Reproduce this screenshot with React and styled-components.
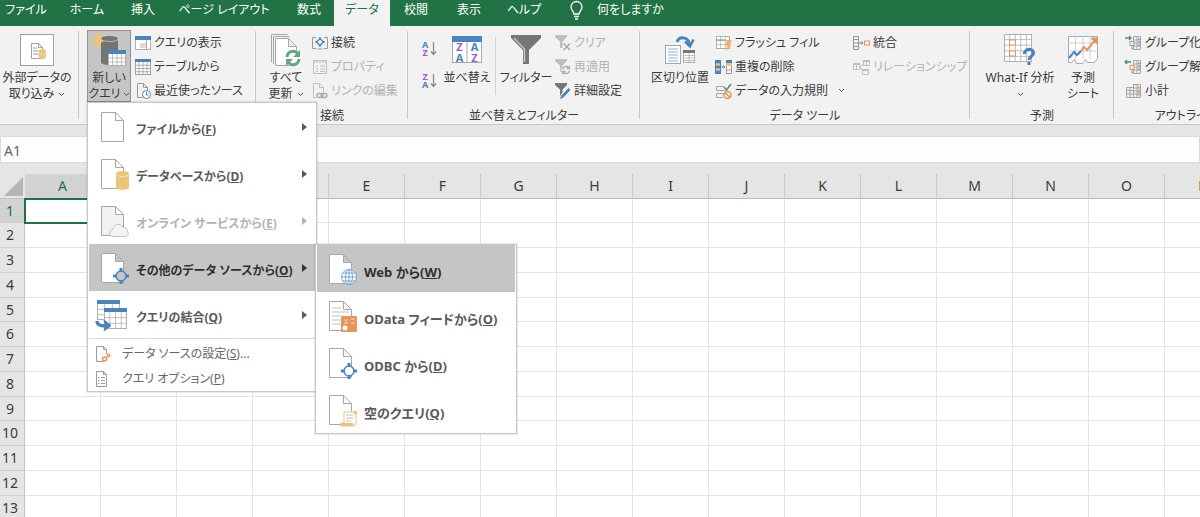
import React from "react";
import styled, { createGlobalStyle, css } from "styled-components";

const c = {
  green: "#217346",
  ribbon: "#f2f2f2",
  chrome: "#e5e5e5",
  line: "#c8c8c8",
  hover: "#c5c5c5",
  text: "#3b3b3b",
  muted: "#b3b3b3",
  blue: "#4a83bd",
  orange: "#e8935a",
  gold: "#ecc478",
  purple: "#9a5fc0",
  gray: "#767676",
};

const Global = createGlobalStyle`
  * { box-sizing: border-box; }
  body {
    margin: 0;
    font-family: "Noto Sans", "Noto Sans CJK JP", sans-serif;
    font-feature-settings: "palt";
    font-size: 12px;
    line-height: 16px;
    color: ${c.text};
  }
  button, input { font: inherit; font-feature-settings: inherit; color: inherit; }
  button { padding: 0; border: 0; background: none; white-space: nowrap; }
  svg { display: block; flex: none; overflow: visible; }
`;

const Page = styled.div`
  display: flex;
  flex-direction: column;
  height: 100vh;
  overflow: hidden;
  background: #fff;
`;

/* ---------- tab strip ---------- */
const Tabs = styled.nav`
  display: flex;
  flex: none;
  height: 26px;
  background: ${c.green};
`;
const Tab = styled.button`
  flex: none;
  width: ${(p) => p.$w}px;
  padding-bottom: 6px;
  color: ${(p) => (p.$active ? c.green : "#fff")};
  background: ${(p) => (p.$active ? c.ribbon : "transparent")};
`;
const TellMe = styled.button`
  display: flex;
  align-items: center;
  gap: 14px;
  padding: 0 0 6px 18px;
  color: #fff;
`;

/* ---------- ribbon ---------- */
const Ribbon = styled.div`
  display: flex;
  flex: none;
  height: 99px;
  background: ${c.ribbon};
  border-bottom: 1px solid ${c.line};
`;
const Group = styled.section`
  position: relative;
  flex: none;
  display: flex;
  flex-direction: column;
  width: ${(p) => p.$w}px;
  padding-top: 4px;
  &::after {
    content: "";
    position: absolute;
    top: 5px;
    right: 0;
    bottom: 5px;
    width: 1px;
    background: ${c.line};
  }
`;
const GroupBody = styled.div`
  display: flex;
  height: 72px;
  padding-left: ${(p) => p.$pad || 0}px;
`;
const GroupLabel = styled.div`
  padding-top: 6px;
  text-align: center;
  white-space: nowrap;
`;
const Large = styled.button`
  display: flex;
  flex: none;
  flex-direction: column;
  align-items: center;
  width: ${(p) => p.$w}px;
  height: 72px;
  padding-top: 3px;
  ${(p) =>
    p.$pressed &&
    css`
      background: ${c.hover};
      box-shadow: inset 0 0 0 1px #919191;
    `}
`;
const LargeIcon = styled.span`
  display: flex;
  align-items: center;
  justify-content: center;
  height: 34px;
  margin-bottom: 3px;
`;
const Line = styled.span`
  display: flex;
  align-items: center;
  gap: ${(p) => (p.$tight ? 2 : 4)}px;
  height: 16px;
`;
const Stack = styled.div`
  display: flex;
  flex: none;
  flex-direction: column;
  align-items: flex-start;
  width: ${(p) => (p.$w ? p.$w + "px" : "auto")};
  margin-left: ${(p) => p.$gap || 0}px;
`;
const Small = styled.button`
  display: flex;
  align-items: center;
  gap: 3px;
  height: 24px;
  padding-top: 1px;
  color: ${(p) => (p.disabled ? c.muted : c.text)};
  svg { opacity: ${(p) => (p.disabled ? 0.8 : 1)}; }
`;
const More = styled.span`
  margin-left: 7px;
`;
const SortStack = styled.div`
  display: flex;
  flex-direction: column;
  gap: 14px;
  width: 22px;
  padding-top: 10px;
`;
const Divider = styled.span`
  width: 1px;
  height: 58px;
  margin: 7px 4px 0 4px;
  background: #d4d4d4;
`;
const Anchor = styled.div`
  position: relative;
  flex: none;
`;

/* ---------- menus ---------- */
const Menu = styled.ul`
  position: absolute;
  z-index: 5;
  top: ${(p) => (p.$sub ? "0" : "100%")};
  left: ${(p) => (p.$sub ? "100%" : "0")};
  width: ${(p) => (p.$sub ? 202 : 230)}px;
  margin: 0;
  padding: 0 1px;
  list-style: none;
  background: #fff;
  border: 1px solid ${c.line};
  box-shadow: 0 0 1px 1px rgba(0, 0, 0, 0.08);
`;
const MenuRow = styled.li`
  position: relative;
`;
const MenuButton = styled.button`
  display: flex;
  align-items: center;
  width: 100%;
  height: 47px;
  padding-left: ${(p) => (p.$sub ? 6 : 6)}px;
  font-size: ${(p) => (p.$sub ? 13 : 12)}px;
  font-weight: bold;
  color: ${(p) => (p.disabled ? c.muted : p.$on ? "#303030" : "#5a5a5a")};
  background: ${(p) => (p.$on ? c.hover : "transparent")};
`;
const MenuText = styled.span`
  flex: 1;
  padding: 6px 0 0 7px;
  text-align: left;
`;
const Arrow = styled.span`
  margin-right: 8px;
  border: solid transparent;
  border-width: 4px 0 4px 5px;
  border-left-color: currentColor;
`;
const MinorItem = styled.button`
  display: flex;
  align-items: center;
  gap: 11px;
  width: 100%;
  height: 25px;
  padding-left: 6px;
  color: #666;
`;
const Rule = styled.li`
  height: 1px;
  margin: 0 0 2px;
  background: #dcdcdc;
`;

/* ---------- formula bar and sheet ---------- */
const NameBar = styled.div`
  flex: none;
  padding: 11px 0;
  background: ${c.chrome};
`;
const NameBox = styled.input`
  display: block;
  width: 100%;
  height: 27px;
  padding: 2px 3px 0;
  font-size: 14px;
  color: #666;
  background: #fdfdfd;
  border: 1px solid #d9d9d9;
`;
const SheetArea = styled.main`
  flex: 1;
  min-height: 0;
  overflow: hidden;
`;
const Sheet = styled.table`
  table-layout: fixed;
  width: 0;
  border-collapse: separate;
  border-spacing: 0;
  font-size: 14px;
  th, td { padding: 0; }
`;
const Col = styled.col`
  width: ${(p) => p.$w}px;
`;
const ColHead = styled.th`
  height: 25px;
  font-weight: normal;
  color: ${(p) => (p.$on ? c.green : c.text)};
  background: ${(p) => (p.$on ? "#d2d2d2" : c.chrome)};
  border-right: 1px solid #cacaca;
  border-bottom: 1px solid ${(p) => (p.$on ? c.green : "#b8b8b8")};
`;
const Corner = styled.th`
  background: ${c.chrome};
  border-bottom: 1px solid #c4c4c4;
  svg { margin-left: 3px; }
`;
const Row = styled.tr`
  height: 25px;
  &:nth-child(4n + 1) { height: 24px; }
`;
const RowHead = styled.th`
  && { padding-right: 4px; }
  font-weight: normal;
  line-height: 20px;
  color: ${(p) => (p.$on ? c.green : c.text)};
  background: ${(p) => (p.$on ? "#d2d2d2" : c.chrome)};
  border-right: 1px solid #c4c4c4;
  border-bottom: 1px solid #cfcfcf;
`;
const Cell = styled.td`
  border-right: 1px solid #e4e4e4;
  border-bottom: 1px solid #e4e4e4;
  ${(p) =>
    p.$on &&
    css`
      outline: 2px solid ${c.green};
      outline-offset: -1px;
    `}
`;

/* ---------- icons ---------- */
const Svg = ({ w = 16, h = 16, children }) => (
  <svg width={w} height={h} viewBox={`0 0 ${w} ${h}`} fill="none" aria-hidden="true">
    {children}
  </svg>
);
const Chevron = () => (
  <Svg w={7} h={5}>
    <path d="M1 1l2.500 2.500L6 1" stroke="#555" />
  </Svg>
);
const Bulb = () => (
  <Svg w={13} h={19}>
    <path d="M4 13c0-2.500-3-3.500-3-7a5.500 5.500 0 0111 0c0 3.500-3 4.500-3 7zM4 15.500h5M5 18h3" stroke="#fff" strokeWidth="1.300" />
  </Svg>
);
const Cylinder = ({ x, y, w, h, fill }) => (
  <g fill={fill}>
    <path d={`M${x} ${y + 2.5}v${h - 5}a${w / 2} 2.500 0 00${w} 0v${-(h - 5)}z`} />
    <ellipse cx={x + w / 2} cy={y + 2.5} rx={w / 2} ry="2.500" />
    <path d={`M${x} ${y + 3}a${w / 2} 2.500 0 00${w} 0`} fill="none" stroke="#fff" strokeOpacity=".7" strokeWidth=".7" />
  </g>
);
const Grid = ({ x, y, w, h, cols, rows, head = c.blue, line = "#b0b0b0", top = 3 }) => (
  <g>
    <rect x={x + 0.5} y={y + 0.5} width={w - 1} height={h - 1} fill="#fff" stroke={line} />
    {Array.from({ length: cols - 1 }, (_, i) => (
      <path key={"c" + i} d={`M${x + ((i + 1) * w) / cols} ${y + top}v${h - top}`} stroke={line} strokeWidth=".8" />
    ))}
    {Array.from({ length: rows - 1 }, (_, i) => (
      <path key={"r" + i} d={`M${x} ${y + top + ((i + 1) * (h - top)) / rows}h${w}`} stroke={line} strokeWidth=".8" />
    ))}
    {top > 0 && <rect x={x} y={y} width={w} height={top} fill={head} />}
  </g>
);
const PageShape = ({ fill = "#fff" }) => (
  <path d="M4.500 1.500h14l8 8v21h-22zM18.500 1.500v8h8" fill={fill} stroke="#a6a6a6" />
);
const Hub = ({ x, y, fill }) => (
  <g transform={`translate(${x} ${y})`}>
    <circle r="5" fill={fill} stroke={c.blue} strokeWidth="1.500" />
    <path d="M-1.500-8h3v4h-3zM-1.500 4h3v4h-3zM-8-1.500h4v3h-4zM4-1.500h4v3h-4z" fill={c.blue} />
  </g>
);

const ExternalIcon = () => (
  <Svg w={34} h={32}>
    <rect x=".5" y=".5" width="33" height="31" fill="#fff" stroke="#a0a0a0" />
    <path d="M11.500 9.500h7l4 4v11h-11zM18.500 9.500v4h4M13 14h4M13 17h6M13 20h6" stroke="#a0a0a0" />
    <Cylinder x={19} y={15} w={7} h={10} fill={c.gold} />
  </Svg>
);
const NewQueryIcon = () => (
  <Svg w={36} h={34}>
    <Cylinder x={10} y={3} w={17} h={29} fill="#747474" />
    <Grid x={17} y={17} w={18} h={16} cols={4} rows={3} top={4} />
    <path d="M5 1h8l-4 6h4L2 19l3-8H1z" fill={c.gold} />
  </Svg>
);
const ShowQueryIcon = () => (
  <Svg>
    <Grid x={0} y={1} w={16} h={14} cols={1} rows={1} top={4} />
    <path d="M11.500 5v10" stroke="#aaa" />
    <rect x="5" y="8" width="6" height="5" fill="#ddd" />
  </Svg>
);
const TableIcon = () => (
  <Svg>
    <Grid x={0} y={0} w={16} h={16} cols={4} rows={4} top={3} line="#a0a0a0" />
  </Svg>
);
const RecentIcon = () => (
  <Svg>
    <path d="M2.500.5h6l4 4V8M8.500.5v4h4M2.500.5v14h5" stroke="#999" />
    <circle cx="11.500" cy="11.500" r="4" fill="#fff" stroke={c.blue} />
    <path d="M11.500 9v3h2" stroke={c.blue} />
  </Svg>
);
const RefreshIcon = () => (
  <Svg w={32} h={34}>
    <path d="M1.500 29V1.500h16M3.500 31V3.500h16" stroke="#a6a6a6" />
    <path d="M5.500 5.500h13l8 8v19h-21zM18.500 5.500v8h8" fill="#fff" stroke="#a6a6a6" />
    <circle cx="23" cy="25" r="8.500" fill="#fff" />
    <path d="M17 24a6 6 0 0111-3M29 26a6 6 0 01-11 3" stroke="#65a484" strokeWidth="3" />
    <path d="M30 17v7h-7zM16 33v-7h7z" fill="#65a484" />
  </Svg>
);
const ConnectionIcon = () => (
  <Svg>
    <path d="M4 2.500H.5v11h4M12 2.500h3.500v11h-4M6 14h4" stroke="#999" />
    <path d="M8 3.500L11.500 7 8 10.500 4.500 7zM8 2v2M8 10v2M3 7h2M11 7h2" stroke={c.blue} strokeWidth="1.400" />
  </Svg>
);
const PropertiesIcon = () => (
  <Svg>
    <rect x="1.500" y="1.500" width="13" height="13" stroke={c.muted} />
    <path d="M1 3h14M4 7h2M8 7h5M4 10h2M8 10h5M4 12.500h2M8 12.500h5" stroke={c.muted} />
  </Svg>
);
const LinkIcon = () => (
  <Svg>
    <path d="M1.500.5h6l4 4V9M7.500.5v4h4M1.500.5v14h3" stroke={c.muted} />
    <rect x="5" y="10.500" width="6" height="4" rx="2" stroke="#999" strokeWidth="1.300" />
    <rect x="9" y="10.500" width="6" height="4" rx="2" stroke="#999" strokeWidth="1.300" />
  </Svg>
);
const SvgLetter = styled.text`
  font-size: ${(p) => p.$size}px;
  font-weight: bold;
  text-anchor: middle;
`;
const SortIcon = ({ a, b, aFill, bFill }) => (
  <Svg w={16} h={18}>
    <SvgLetter $size={9} x="4" y="8" fill={aFill}>{a}</SvgLetter>
    <SvgLetter $size={9} x="4" y="16" fill={bFill}>{b}</SvgLetter>
    <path d="M12.500 2v12M10 11.500l2.500 3 2.500-3" stroke="#8a8a8a" strokeWidth="1.300" />
  </Svg>
);
const SortDialogIcon = () => (
  <Svg w={30} h={28}>
    <rect x=".5" y=".5" width="29" height="26" fill="#fff" stroke="#a9a9a9" />
    <rect width="30" height="6" fill={c.blue} />
    <path d="M15 6v21" stroke="#a9a9a9" />
    <SvgLetter $size={11} x="7.500" y="15" fill={c.purple}>Z</SvgLetter>
    <SvgLetter $size={11} x="7.500" y="26" fill={c.blue}>A</SvgLetter>
    <SvgLetter $size={11} x="22.500" y="15" fill={c.blue}>A</SvgLetter>
    <SvgLetter $size={11} x="22.500" y="26" fill={c.purple}>Z</SvgLetter>
  </Svg>
);
const FilterIcon = () => (
  <Svg w={30} h={30}>
    <path d="M0 0h30v3L18 15v14h-6V15L0 3z" fill={c.gray} />
    <path d="M3 3l10.500 11v13" stroke="#c9c9c9" strokeWidth="1.300" />
  </Svg>
);
const SmallFunnel = ({ fill }) => <path d="M0 0h12v2L7.500 6.500V13H5V6.500L0 2z" fill={fill} />;
const ClearIcon = () => (
  <Svg>
    <SmallFunnel fill={c.muted} />
    <path d="M8.500 8.500l6.500 6.500M15 8.500L8.500 15" stroke="#999" strokeWidth="1.500" />
  </Svg>
);
const ReapplyIcon = () => (
  <Svg>
    <SmallFunnel fill={c.muted} />
    <circle cx="11" cy="11" r="5" fill={c.ribbon} />
    <path d="M7.500 10.500a3.500 3.500 0 016-2M14.500 11.500a3.500 3.500 0 01-6 2M14.500 6.500v3h-3M7.500 15.500v-3h3" stroke="#999" strokeWidth="1.300" />
  </Svg>
);
const AdvancedIcon = () => (
  <Svg>
    <SmallFunnel fill={c.gray} />
    <path d="M14.500 6L7 14" stroke={c.ribbon} strokeWidth="5" />
    <path d="M14.500 6L7 14" stroke={c.blue} strokeWidth="2.600" />
    <path d="M5 16l1-3 2 2z" fill={c.blue} />
  </Svg>
);
const SplitIcon = () => (
  <Svg w={31} h={30}>
    <rect x=".5" y="10.500" width="15" height="18" fill="#fff" stroke="#a6a6a6" />
    <path d="M3 14h10M3 17h10M3 20h10M3 23h10M3 26h10" stroke="#8fb4d8" />
    <Grid x={18} y={15} w={12} h={13} cols={2} rows={4} top={3} head={c.gray} />
    <path d="M12 7c2-6 11-6 13 3" stroke={c.blue} strokeWidth="3" />
    <path d="M20 6.500l5 5 3.500-7" stroke={c.blue} strokeWidth="2.500" />
  </Svg>
);
const FlashIcon = () => (
  <Svg w={17}>
    <Grid x={1} y={1} w={14} h={13} cols={3} rows={3} top={0} />
    <path d="M1 5h9" stroke="#65a484" />
    <path d="M12 5h5l-2 4h2l-6 7 1.500-5H10z" fill="#eeb066" />
  </Svg>
);
const DedupeIcon = () => (
  <Svg w={17}>
    <rect x=".5" y="1.500" width="5" height="13" fill={c.gold} stroke={c.blue} />
    <path d="M0 3h6M0 8h6M0 13h6" stroke={c.blue} strokeWidth="2.500" />
    <path d="M6 8h4M8.500 6.500L10 8 8.500 9.500" stroke={c.blue} />
    <rect x="11.500" y="1.500" width="5" height="13" fill="#fff" stroke="#999" />
    <rect x="11" y="1" width="6" height="3" fill={c.blue} />
    <rect x="11" y="4" width="6" height="3" fill={c.gold} />
    <path d="M11 11h6" stroke="#999" />
  </Svg>
);
const ValidationIcon = () => (
  <Svg w={17}>
    <path d="M9 3.500H1.500v4H10M9 10.500H1.500v4H8" stroke="#a6a6a6" />
    <path d="M9 4l2.500 3L16 1" stroke="#4b9470" strokeWidth="1.500" />
    <circle cx="12.500" cy="12" r="3.500" stroke={c.orange} strokeWidth="1.500" />
    <path d="M10 9.500l5 5" stroke={c.orange} strokeWidth="1.500" />
  </Svg>
);
const ConsolidateIcon = () => (
  <Svg w={17}>
    <path d="M.5 1.500h5v13h-5zM.5 4.500h5M.5 8h5M.5 11.500h5" stroke="#999" />
    <path d="M6 8h4M8.500 6.500L10 8 8.500 9.500" stroke={c.blue} />
    <rect x="11.500" y="6" width="5" height="4" stroke={c.orange} />
  </Svg>
);
const RelationIcon = () => (
  <Svg w={17}>
    <path d="M.5 4.500h6v6h-6zM10.500 1.500h6v5h-6zM9.500 10.500h6v5h-6zM3.500 5v5M13.500 2v4M7 7h2l2-3M7 8l2 3" stroke={c.muted} />
    <path d="M0 5h7M10 2h7M9 11h7" stroke={c.muted} strokeWidth="2" />
  </Svg>
);
const WhatIfIcon = () => (
  <Svg w={32} h={32}>
    <Grid x={0} y={0} w={28} h={28} cols={5} rows={5} top={0} />
    <path d="M5.500 6h6v5h-6zM5.500 17h6v5h-6z" fill="#fff" stroke={c.orange} />
    <path d="M20.500 20c0-6 9-6 9-1 0 3.500-4.500 3-4.500 7M25 28v3" stroke={c.blue} strokeWidth="3.200" />
  </Svg>
);
const ForecastIcon = () => (
  <Svg w={30} h={28}>
    <path d="M.5.500h29v22l-3 4h-7l-2-3-3 4h-6l-2-4-3 3h-3z" fill="#fff" stroke="#a9a9a9" />
    <path d="M0 7h30M0 15h30M7.500 0v23M15 0v23M22 0v23" stroke="#cfcfcf" />
    <path d="M1 22l5-6 3 3 4-4" stroke={c.blue} strokeWidth="2" />
    <path d="M13 15l3-4 3 3L28 3" stroke={c.orange} strokeWidth="2" />
    <path d="M23 2h6v6z" fill={c.orange} stroke={c.orange} />
  </Svg>
);
const OutlineIcon = ({ kind }) => (
  <Svg w={17}>
    <path d="M8.500 1.500h7v13h-7zM12 1.500v13M8.500 5h7M8.500 8h7M8.500 11h7" stroke="#a6a6a6" />
    <path d="M13 4h2M13 7h2M13 10h2" stroke={kind === "total" ? c.orange : c.blue} />
    {kind === "total" ? (
      <path d="M1.500 4.500h7v10h-7zM1.500 7.500h7M1.500 11h7M5 4.500v10M12 9h4M12 12h4" stroke="#a6a6a6" />
    ) : (
      <>
        <path d={kind === "group" ? "M0 3h6M4 1l2 2-2 2" : "M0 3h6M2 1L0 3l2 2"} stroke="#4b9470" strokeWidth="1.300" />
        <rect x="5" y="6.500" width="4" height="4" fill={c.ribbon} stroke={kind === "group" ? "#999" : c.orange} />
        <path d="M7 11v3h2" stroke="#999" />
      </>
    )}
  </Svg>
);

const MenuIcon = ({ kind, on }) => (
  <Svg w={34} h={34}>
    {kind === "combine" ? (
      <>
        <Grid x={2} y={2} w={23} h={20} cols={3} rows={3} top={4} />
        <Grid x={9} y={10} w={23} h={21} cols={4} rows={3} top={4} />
        <path d="M2 23c0 4 3 5 9 5" stroke={c.blue} strokeWidth="3.500" />
        <path d="M9 22l7 5.500-7 5.500 1.500-5.500z" fill={c.blue} stroke={c.blue} />
      </>
    ) : (
      <>
        <g transform="translate(2 1)"><PageShape fill={kind === "cloud" ? "#f3f1f4" : "#fff"} /></g>
        {kind === "db" && <Cylinder x={21} y={14} w={13} h={19} fill={c.gold} />}
        {kind === "cloud" && (
          <path d="M18 32.500a3.500 3.500 0 010-7c0-6 8-7 10-2 4-1 5 3 4.500 4 2 2 0 5-2 5z" fill="#f3f3f3" stroke="#c4c4c4" />
        )}
        {kind === "hub" && <Hub x={26} y={25} fill={on ? c.hover : "#fff"} />}
        {kind === "web" && (
          <g stroke="#78a4d0" fill="none">
            <circle cx="26" cy="25" r="7.500" fill="#fff" />
            <ellipse cx="26" cy="25" rx="3.500" ry="7.500" />
            <path d="M26 17.500v15M18.500 25h15M20 21h12M20 29h12" />
          </g>
        )}
        {kind === "odata" && (
          <>
            <path d="M9 9h9M9 13h17M9 17h9M9 21h9M9 25h9" stroke="#bdbdbd" />
            <rect x="18" y="17" width="16" height="16" rx="1" fill={c.orange} />
            <path d="M21 20l2 2 2-2M28 20h4M21 24h4M28 24h4" stroke="#fadcc0" />
            <circle cx="22" cy="29" r="2.500" fill="#fff" />
          </>
        )}
        {kind === "blank" && (
          <>
            <path d="M21 19h12v11a3 3 0 01-3 3H18v-3h3z" fill="#fff" stroke={c.gold} />
            <path d="M18 30h12v3H18z" fill={c.gold} />
            <path d="M31 18h3v3h-3z" fill={c.gold} />
            <path d="M23 22h7M23 25h7M23 28h5" stroke="#bdbdbd" />
          </>
        )}
      </>
    )}
  </Svg>
);
const SettingsPageIcon = () => (
  <Svg>
    <path d="M8 15.500H1.500V.5h7l3 3V8M8.500.5v3h3" stroke="#999" />
    <circle cx="9.500" cy="13" r="2" stroke={c.orange} strokeWidth="1.500" />
    <circle cx="13.500" cy="9.500" r="1.300" stroke={c.orange} strokeWidth="1.300" />
  </Svg>
);
const OptionsPageIcon = () => (
  <Svg>
    <path d="M1.500.5h7l3 3v12h-10zM8.500.5v3h3M3 6.500h1.500M6 6.500h4M3 9.500h1.500M6 9.500h4M3 12.500h1.500M6 12.500h4" stroke="#999" />
  </Svg>
);

/* ---------- data ---------- */
const tabs = [
  ["ファイル", 52], ["ホーム", 70], ["挿入", 42], ["ページ レイアウト", 120], ["数式", 50],
  ["データ", 56, true], ["校閲", 52], ["表示", 54], ["ヘルプ", 56],
];
const queryMenu = [
  ["file", "ファイルから", "F"],
  ["db", "データベースから", "D"],
  ["cloud", "オンライン サービスから", "E"],
  ["hub", "その他のデータ ソースから", "O"],
  ["combine", "クエリの結合", "Q"],
];
const sourceMenu = [
  ["web", "Web から", "W"],
  ["odata", "OData フィードから", "O"],
  ["hub", "ODBC から", "D"],
  ["blank", "空のクエリ", "Q"],
];
const columns = "ABCDEFGHIJKLMNOPQRSTUVWXYZ".split("");
const rows = Array.from({ length: 40 }, (_, i) => i + 1);

const Key = ({ k }) => <>(<u>{k}</u>)</>;

const BigButton = ({ w, icon, lines, more, tight, ...rest }) => (
  <Large $w={w} {...rest}>
    <LargeIcon>{icon}</LargeIcon>
    {lines.map((t, i) => (
      <Line key={i} $tight={tight}>
        {t && <span>{t}</span>}
        {more && i === lines.length - 1 && <Chevron />}
      </Line>
    ))}
  </Large>
);
const SmallButton = ({ icon, text, more, off }) => (
  <Small disabled={off}>
    {icon}
    <span>{text}</span>
    {more && <More><Chevron /></More>}
  </Small>
);

const SourceMenu = () => (
  <Menu $sub role="menu">
    {sourceMenu.map(([kind, text, k], i) => (
      <MenuRow key={kind} role="none">
        <MenuButton role="menuitem" $sub $on={i === 0}>
          <MenuIcon kind={kind} />
          <MenuText>{text}<Key k={k} /></MenuText>
        </MenuButton>
      </MenuRow>
    ))}
  </Menu>
);
const QueryMenu = () => (
  <Menu role="menu">
    {queryMenu.map(([kind, text, k]) => (
      <MenuRow key={kind} role="none">
        <MenuButton role="menuitem" aria-haspopup="menu" $on={kind === "hub"} disabled={kind === "cloud"}>
          <MenuIcon kind={kind} on={kind === "hub"} />
          <MenuText>{text}<Key k={k} /></MenuText>
          <Arrow />
        </MenuButton>
        {kind === "hub" && <SourceMenu />}
      </MenuRow>
    ))}
    <Rule role="separator" />
    <MenuRow role="none">
      <MinorItem role="menuitem"><SettingsPageIcon /><span>データ ソースの設定<Key k="S" />...</span></MinorItem>
    </MenuRow>
    <MenuRow role="none">
      <MinorItem role="menuitem"><OptionsPageIcon /><span>クエリ オプション<Key k="P" /></span></MinorItem>
    </MenuRow>
  </Menu>
);

export default function App() {
  return (
    <Page>
      <Global />
      <Tabs>
        {tabs.map(([t, w, on]) => (
          <Tab key={t} $w={w} $active={on}>{t}</Tab>
        ))}
        <TellMe><Bulb /><span>何をしますか</span></TellMe>
      </Tabs>

      <Ribbon>
        <Group $w={79}>
          <GroupBody $pad={2}>
            <BigButton w={70} icon={<ExternalIcon />} lines={["外部データの", "取り込み"]} more />
          </GroupBody>
        </Group>
        <Group $w={177}>
          <GroupBody $pad={8}>
            <Anchor>
              <BigButton w={44} $pressed aria-expanded="true" icon={<NewQueryIcon />} lines={["新しい", "クエリ"]} more tight />
              <QueryMenu />
            </Anchor>
            <Stack $gap={4}>
              <SmallButton icon={<ShowQueryIcon />} text="クエリの表示" />
              <SmallButton icon={<TableIcon />} text="テーブルから" />
              <SmallButton icon={<RecentIcon />} text="最近使ったソース" />
            </Stack>
          </GroupBody>
        </Group>
        <Group $w={152}>
          <GroupBody $pad={8}>
            <BigButton w={44} icon={<RefreshIcon />} lines={["すべて", "更新"]} more />
            <Stack $gap={4}>
              <SmallButton icon={<ConnectionIcon />} text="接続" />
              <SmallButton icon={<PropertiesIcon />} text="プロパティ" off />
              <SmallButton icon={<LinkIcon />} text="リンクの編集" off />
            </Stack>
          </GroupBody>
          <GroupLabel>接続</GroupLabel>
        </Group>
        <Group $w={232}>
          <GroupBody $pad={13}>
            <SortStack>
              <button aria-label="昇順"><SortIcon a="A" b="Z" aFill={c.blue} bFill={c.purple} /></button>
              <button aria-label="降順"><SortIcon a="Z" b="A" aFill={c.purple} bFill={c.blue} /></button>
            </SortStack>
            <BigButton w={48} icon={<SortDialogIcon />} lines={["並べ替え"]} />
            <Divider />
            <BigButton w={52} icon={<FilterIcon />} lines={["フィルター"]} />
            <Stack $gap={3}>
              <SmallButton icon={<ClearIcon />} text="クリア" off />
              <SmallButton icon={<ReapplyIcon />} text="再適用" off />
              <SmallButton icon={<AdvancedIcon />} text="詳細設定" />
            </Stack>
          </GroupBody>
          <GroupLabel>並べ替えとフィルター</GroupLabel>
        </Group>
        <Group $w={330}>
          <GroupBody $pad={9}>
            <BigButton w={62} icon={<SplitIcon />} lines={["区切り位置"]} />
            <Stack $gap={4} $w={138}>
              <SmallButton icon={<FlashIcon />} text="フラッシュ フィル" />
              <SmallButton icon={<DedupeIcon />} text="重複の削除" />
              <SmallButton icon={<ValidationIcon />} text="データの入力規則" more />
            </Stack>
            <Stack>
              <SmallButton icon={<ConsolidateIcon />} text="統合" />
              <SmallButton icon={<RelationIcon />} text="リレーションシップ" off />
            </Stack>
          </GroupBody>
          <GroupLabel>データ ツール</GroupLabel>
        </Group>
        <Group $w={144}>
          <GroupBody $pad={9}>
            <BigButton w={82} icon={<WhatIfIcon />} lines={["What-If 分析", ""]} more />
            <BigButton w={44} icon={<ForecastIcon />} lines={["予測", "シート"]} />
          </GroupBody>
          <GroupLabel>予測</GroupLabel>
        </Group>
        <Group $w={144}>
          <GroupBody $pad={11}>
            <Stack>
              <SmallButton icon={<OutlineIcon kind="group" />} text="グループ化" />
              <SmallButton icon={<OutlineIcon kind="ungroup" />} text="グループ解除" />
              <SmallButton icon={<OutlineIcon kind="total" />} text="小計" />
            </Stack>
          </GroupBody>
          <GroupLabel>アウトライン</GroupLabel>
        </Group>
      </Ribbon>

      <NameBar>
        <NameBox aria-label="名前ボックス" defaultValue="A1" />
      </NameBar>

      <SheetArea>
        <Sheet>
          <colgroup>
            <Col $w={25} />
            {columns.map((l) => <Col key={l} $w={76} />)}
          </colgroup>
          <thead>
            <tr>
              <Corner aria-label="すべて選択">
                <Svg w={21} h={22}><path d="M20 2v19H1z" fill="#b5b5b5" /></Svg>
              </Corner>
              {columns.map((l) => <ColHead key={l} scope="col" $on={l === "A"}>{l}</ColHead>)}
            </tr>
          </thead>
          <tbody>
            {rows.map((r) => (
              <Row key={r}>
                <RowHead scope="row" $on={r === 1}>{r}</RowHead>
                {columns.map((l) => <Cell key={l} $on={r === 1 && l === "A"} />)}
              </Row>
            ))}
          </tbody>
        </Sheet>
      </SheetArea>
    </Page>
  );
}
